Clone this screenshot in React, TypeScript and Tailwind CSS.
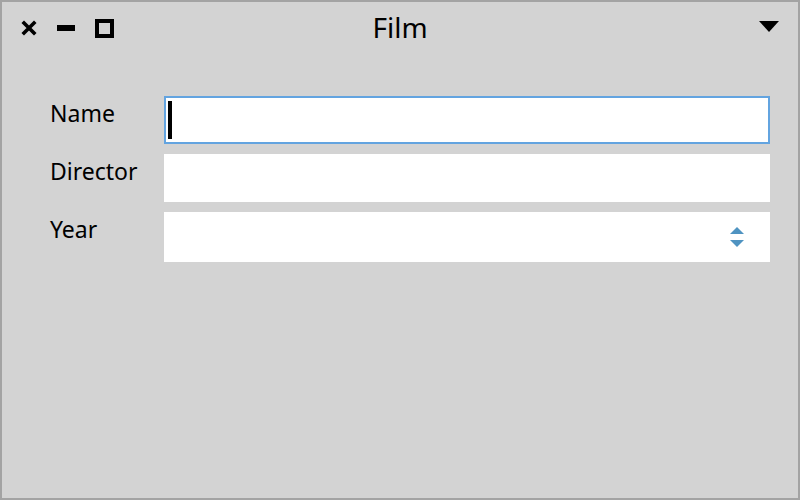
import { useState } from "react";

function Field({ label, children }: { label: string; children: React.ReactNode }) {
  return (
    <div className="flex items-start">
      <div className="w-[114px] pt-[1px] text-[23px] leading-[32px] text-black">{label}</div>
      <div className="flex-1">{children}</div>
    </div>
  );
}

export default function App() {
  const [name, setName] = useState("");

  return (
    <div
      className="w-[800px] h-[500px] bg-[#d3d3d3] border-2 border-[#a3a3a3] flex flex-col"
      style={{ fontFamily: '"Noto Sans", "Open Sans", sans-serif' }}
    >
      {/* title bar */}
      <div className="h-[52px] grid grid-cols-[1fr_auto_1fr] items-center px-[18px]">
        <div className="flex items-center gap-[20px]">
          <svg width="16" height="16" viewBox="0 0 16 16" className="ml-[1px]">
            <path d="M3 3 L13 13 M13 3 L3 13" stroke="black" strokeWidth="3.6" strokeLinecap="square" />
          </svg>
          <div className="w-[18px] h-[6px] bg-black" />
          <div className="w-[19px] h-[19px] border-[4px] border-black" />
        </div>
        <div className="text-center text-[28px] leading-[34px] text-black -mt-[2px]">Film</div>
        <div className="flex justify-end">
          <svg width="20" height="12" viewBox="0 0 20 12" className="mr-[1px] -mt-[2px]">
            <path d="M0 0 H20 L10 11 Z" fill="black" />
          </svg>
        </div>
      </div>

      {/* form */}
      <div className="flex flex-col gap-[10px] pl-[48px] pr-[28px] pt-[42px]">
        <Field label="Name">
          <div className="h-[48px] bg-white border-2 border-[#63a4e0] flex items-center pl-[2px]">
            <div className="w-[4px] h-[38px] bg-black" />
            <input
              value={name}
              onChange={(e) => setName(e.target.value)}
              className="flex-1 h-full outline-none bg-transparent text-[20px]"
            />
          </div>
        </Field>
        <Field label="Director">
          <div className="h-[48px] bg-white" />
        </Field>
        <Field label="Year">
          <div className="h-[50px] bg-white flex items-center justify-end pr-[25px]">
            <svg width="16" height="24" viewBox="0 0 16 24">
              <path d="M1 9 L8 2 L15 9 Z" fill="#4f93c1" />
              <path d="M1 15 H15 L8 22 Z" fill="#4f93c1" />
            </svg>
          </div>
        </Field>
      </div>
    </div>
  );
}
